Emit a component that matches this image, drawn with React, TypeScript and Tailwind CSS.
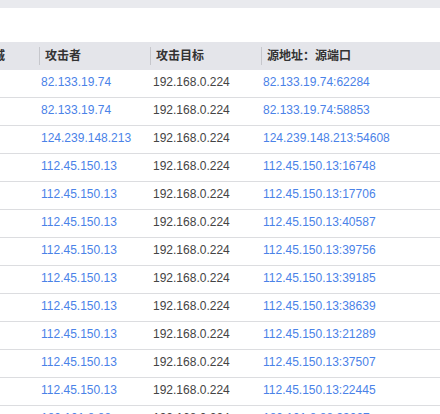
const rows = [
  ['82.133.19.74', '192.168.0.224', '82.133.19.74:62284'],
  ['82.133.19.74', '192.168.0.224', '82.133.19.74:58853'],
  ['124.239.148.213', '192.168.0.224', '124.239.148.213:54608'],
  ['112.45.150.13', '192.168.0.224', '112.45.150.13:16748'],
  ['112.45.150.13', '192.168.0.224', '112.45.150.13:17706'],
  ['112.45.150.13', '192.168.0.224', '112.45.150.13:40587'],
  ['112.45.150.13', '192.168.0.224', '112.45.150.13:39756'],
  ['112.45.150.13', '192.168.0.224', '112.45.150.13:39185'],
  ['112.45.150.13', '192.168.0.224', '112.45.150.13:38639'],
  ['112.45.150.13', '192.168.0.224', '112.45.150.13:21289'],
  ['112.45.150.13', '192.168.0.224', '112.45.150.13:37507'],
  ['112.45.150.13', '192.168.0.224', '112.45.150.13:22445'],
  ['180.101.8.88', '192.168.0.224', '180.101.8.88:33027'],
];

const headers = ['攻击者', '攻击目标', '源地址：源端口'];

export default function App() {
  return (
    <div className="w-[440px] h-[414px] overflow-hidden bg-white text-[12px] font-['Liberation_Sans','Noto_Sans_CJK_SC',sans-serif]">
      {/* top strip */}
      <div className="h-[8px] bg-[#e9eaee]" />
      <div className="h-[34px]" />

      {/* header */}
      <div className="flex h-[28px] bg-[#e4e5ea] text-[#333] font-bold">
        <div className="w-[39px] shrink-0 overflow-hidden flex items-center">
          <span className="ml-[-7px]">城</span>
        </div>
        {headers.map((h, i) => (
          <div key={h} className={i === 2 ? 'flex-1 flex items-center' : 'w-[111px] shrink-0 flex items-center'}>
            <div className="w-px h-[18px] bg-[#c6c7cc]" />
            <span className="ml-[5px]">{h}</span>
          </div>
        ))}
      </div>

      {/* body */}
      {rows.map((r, i) => (
        <div key={i} className="flex h-[28px] border-b border-[#dcdde0] leading-[14px] pt-[5px]">
          <div className="w-[39px] shrink-0" />
          <div className="w-[111px] shrink-0 pl-[2px] text-[#4a82e8]">{r[0]}</div>
          <div className="w-[111px] shrink-0 pl-[3px] text-[#444]">{r[1]}</div>
          <div className="flex-1 pl-[2px] text-[#4a82e8]">{r[2]}</div>
        </div>
      ))}
    </div>
  );
}
